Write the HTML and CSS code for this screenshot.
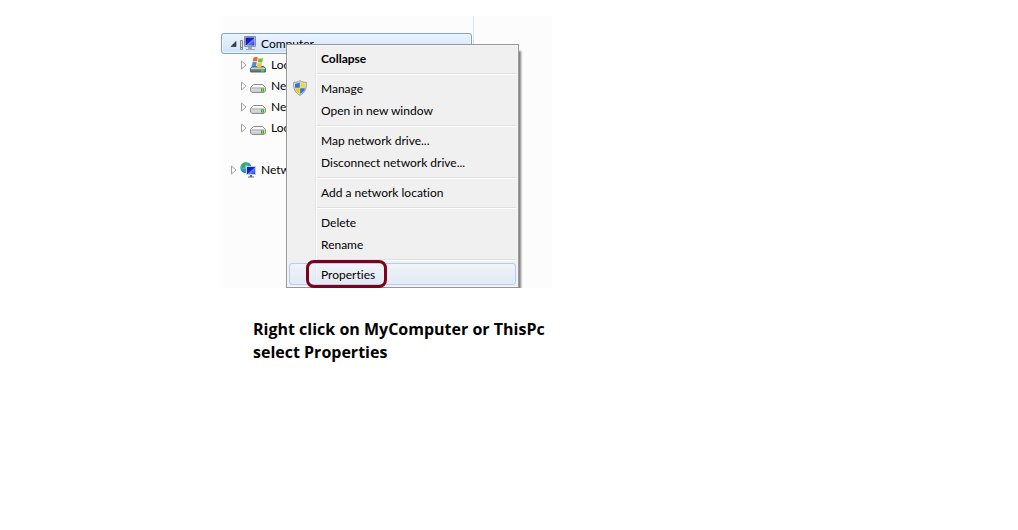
FILE: index.html
```html
<!DOCTYPE html>
<html lang="en">
<head>
<meta charset="utf-8">
<title>Open computer properties</title>
<link rel="stylesheet" href="styles.css">
</head>
<body>
<svg class="defs" aria-hidden="true">
  <defs>
    <linearGradient id="screen" x1="0" y1="0" x2="1" y2="1"><stop offset="0" stop-color="#0710b4"/><stop offset=".5" stop-color="#1726dc"/><stop offset=".55" stop-color="#6f8cf5"/><stop offset="1" stop-color="#1b2bd6"/></linearGradient>
    <linearGradient id="metal" x1="0" y1="0" x2="0" y2="1"><stop offset="0" stop-color="#f8f8f8"/><stop offset="1" stop-color="#c4c4cc"/></linearGradient>
    <linearGradient id="steel" x1="0" y1="0" x2="0" y2="1"><stop offset="0" stop-color="#a9bcc6"/><stop offset="1" stop-color="#4d646e"/></linearGradient>
    <radialGradient id="globe" cx=".35" cy=".3" r=".8"><stop offset="0" stop-color="#b5ecff"/><stop offset=".5" stop-color="#2d9be0"/><stop offset="1" stop-color="#0a4f9e"/></radialGradient>
    <symbol id="arrow" viewBox="0 0 8 10"><path d="M1.500 1v8L6 5z" fill="#fff" stroke="#a0a0a0"/></symbol>
    <symbol id="drive" viewBox="0 0 16 16"><path d="M3.500 6.500h9l3 3v3.500l-1.500 1.500H2L.5 13V9.500z" fill="url(#metal)" stroke="#8d8d91"/><path d="M3.700 7h8.600l2.200 2.500h-13z" fill="#fbfbfb"/><path d="M1.500 10h13" stroke="#a5a5a9"/><path d="M11 10.500h3v3h-3z" fill="#31a51d"/><path d="M12 10.500h1v3h-1z" fill="#78e84c"/></symbol>
  </defs>
</svg>
<main class="page">
  <section class="explorer">
    <nav class="tree" aria-label="Folders">
      <a class="node node-selected" href="#computer">
        <svg class="arrow" viewBox="0 0 8 10"><path d="M6 2.500v5H1z" fill="#404040" stroke="#202020" stroke-width=".6"/></svg>
        <svg class="icon" viewBox="0 0 16 16"><path d="M.5 4.500h2v9h-2z" fill="#d8dadc" stroke="#85898d"/><path d="M1 11h1v1H1z" fill="#3cad2c"/><path d="M4.500.5h11v10h-11z" fill="#dfe2e8" stroke="#8c919c"/><path d="M5.500 1.500h9v8h-9z" fill="url(#screen)"/><path d="M8 11h4v2h3v1H6v-1h2z" fill="#a4a9ad"/></svg>
        Computer</a>
      <a class="node node-child" href="#local-c"><svg class="arrow"><use href="#arrow"/></svg>
        <svg class="icon" viewBox="0 0 16 16"><path d="M2 9.500h12l1.500 2v3.500H.5v-3.500z" fill="url(#steel)" stroke="#586971"/><path d="M1 11.500h14" stroke="#c7d2d6"/><path d="M11 12.500h3v2h-3z" fill="#4ae13a"/><path d="M3.500.8c2-1.300 3-1 4.300-.2L7 4.600c-1.500-.8-2.700-.8-4.300 0z" fill="#ef6428"/><path d="M8.600.9c1.300.8 2.800.8 4.500 0l-.9 4.100c-1.600.8-3 .8-4.400 0z" fill="#79b934"/><path d="M2.500 5.300c1.500-.8 2.900-.8 4.300 0L6 9.400c-1.600-.8-2.900-.8-4.300 0z" fill="#3c93da"/><path d="M7.600 5.700c1.500.8 2.900.8 4.500 0l-.9 4.100c-1.600.8-3 .8-4.400 0z" fill="#f8c431"/></svg>
        Local Disk</a>
      <a class="node node-child" href="#net-1"><svg class="arrow"><use href="#arrow"/></svg><svg class="icon"><use href="#drive"/></svg>Net</a>
      <a class="node node-child" href="#net-2"><svg class="arrow"><use href="#arrow"/></svg><svg class="icon"><use href="#drive"/></svg>Net</a>
      <a class="node node-child" href="#local-d"><svg class="arrow"><use href="#arrow"/></svg><svg class="icon"><use href="#drive"/></svg>Local Disk</a>
      <a class="node node-root" href="#network"><svg class="arrow"><use href="#arrow"/></svg>
        <svg class="icon" viewBox="0 0 16 16"><circle cx="5.800" cy="5.500" r="5.500" fill="url(#globe)"/><path d="M1 4C2 1.500 4 .5 6 .5L7.500 2 5.500 3.500 4.500 6 2.500 6.500zM8 1l3 3-2 1zM3 8l3 1 .5 2H5z" fill="#3aae3f"/><path d="M6.500 4.500h9v8h-9z" fill="url(#screen)" stroke="#c3d3e8"/><path d="M10 13h2v1.500h2v1H8v-1h2z" fill="#5d6b8b"/></svg>
        Network</a>
    </nav>
    <div class="menu" role="menu">
      <button class="item item-default" role="menuitem">Collapse</button>
      <hr class="rule">
      <button class="item" role="menuitem">
        <svg class="shield" viewBox="0 0 16 16"><path d="M8 .7c2 1.300 4 1.700 6.300 1.600.4 6-1.300 10.700-6.300 13C3 13 1.300 8.300 1.700 2.300 4 2.400 6 2 8 .7z" fill="#e4e8eb" stroke="#8f979c"/><path d="M7.800 2.300v5.500H3V3.700C5 3.600 6.500 3.100 7.800 2.300z" fill="#2579d3"/><path d="M8.200 2.300v5.500H13V3.700c-2-.1-3.500-.6-4.800-1.400z" fill="#fbd135"/><path d="M3 8.200h4.800v5.700C5 12.600 3.400 10.500 3 8.200z" fill="#f6c61c"/><path d="M13 8.200H8.200v5.700c2.800-1.300 4.400-3.400 4.800-5.700z" fill="#2579d3"/></svg>
        Manage</button>
      <button class="item" role="menuitem">Open in new window</button>
      <hr class="rule">
      <button class="item" role="menuitem">Map network drive...</button>
      <button class="item" role="menuitem">Disconnect network drive...</button>
      <hr class="rule">
      <button class="item" role="menuitem">Add a network location</button>
      <hr class="rule">
      <button class="item" role="menuitem">Delete</button>
      <button class="item" role="menuitem">Rename</button>
      <hr class="rule">
      <button class="item item-active" role="menuitem">Properties<span class="ring"></span></button>
    </div>
  </section>
  <p class="caption">Right click on MyComputer or ThisPc<br>select Properties</p>
</main>
</body>
</html>
```

FILE: styles.css
```css
* { box-sizing: border-box; }

body {
  margin: 0;
  background: #fff;
  color: #000;
  font-family: Lato, "Open Sans", sans-serif;
  font-size: 12px;
  font-variant-ligatures: none;
}

.defs { position: absolute; width: 0; height: 0; }

.page { padding: 16px 16px 16px 221px; }

.explorer {
  display: grid;
  grid-template-columns: 253px 1fr;
  max-width: 331px;
  overflow: hidden;
  background: #fcfcfc;
}

.tree {
  grid-area: 1 / 1;
  padding: 17px 1px 0 0;
  border-right: 1px solid #d6e5f5;
}

.node {
  display: flex;
  align-items: center;
  height: 21px;
  padding-left: 8px;
  border: 1px solid transparent;
  color: #000;
  text-decoration: none;
  white-space: nowrap;
}

.node-selected {
  border-color: #7da2ce;
  border-radius: 3px;
  background: linear-gradient(#eaf3fe, #cfe3fd);
  box-shadow: inset 0 0 0 1px #f1f7fe;
}

.node-child { padding-left: 18px; }
.node-root { margin-top: 21px; }

.arrow { flex: none; width: 8px; height: 10px; margin-right: 2px; }
.icon { flex: none; width: 16px; height: 16px; margin-right: 5px; }

.menu {
  grid-area: 1 / 1 / 2 / 3;
  z-index: 1;
  margin: 28px 33px 0 65px;
  padding: 2px;
  border: 1px solid #979797;
  background:
    linear-gradient(90deg, #e2e3e3 1px, #fff 1px) 28px 2px / 2px calc(100% - 4px) no-repeat,
    #f0f0f0;
  box-shadow: inset 0 0 0 1px #f5f5f5, 3px 6px 2px -1px #808080;
}

.item {
  position: relative;
  display: flex;
  align-items: center;
  width: 100%;
  height: 22px;
  padding: 0 0 0 31px;
  border: 1px solid transparent;
  border-radius: 3px;
  background: none;
  color: #000;
  font: inherit;
  text-align: left;
  white-space: nowrap;
}

.item-default { font-weight: 700; }

.item-active {
  border-color: #aecff7;
  background: linear-gradient(rgba(240, 244, 250, .6), rgba(224, 233, 246, .8));
}

.shield { width: 16px; height: 16px; margin: 0 13px 0 -29px; }

.rule {
  height: 2px;
  margin: 4px 0 2px 28px;
  border: 0;
  border-top: 1px solid #e0e0e0;
  background: #fff;
}

.ring {
  position: absolute;
  top: -4px;
  left: 16px;
  width: 81px;
  height: 28px;
  border: 3px solid #7f0019;
  border-radius: 8px;
}

.caption {
  margin: 30px 0 0 32px;
  font-family: "Open Sans", "Noto Sans", sans-serif;
  font-size: 16px;
  font-weight: 700;
  line-height: 23px;
}
```
